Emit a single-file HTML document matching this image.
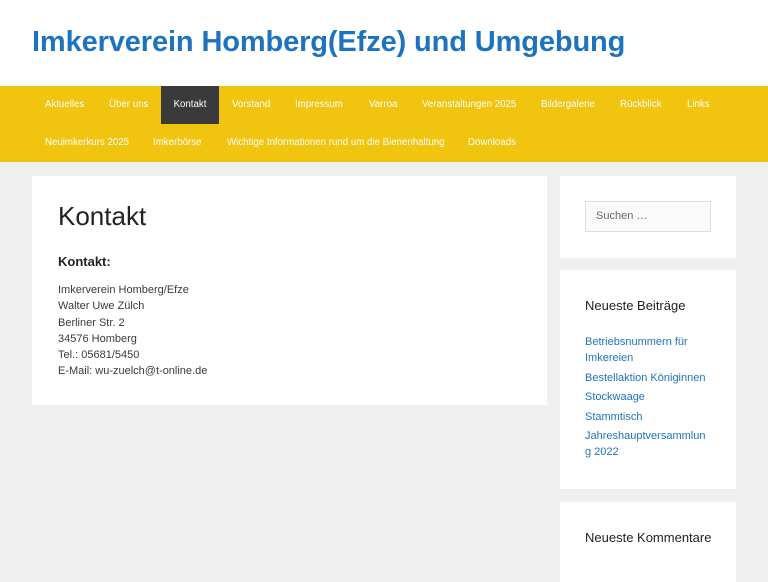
<!DOCTYPE html>
<html><head><meta charset="utf-8"><style>
*{margin:0;padding:0;box-sizing:border-box}
body{width:768px;height:576px;overflow:hidden;background:#efefef;font-family:"Liberation Sans",Arial,sans-serif;position:relative}
.hdr{position:absolute;left:0;top:0;width:768px;height:86px;background:#fff}
.hdr h1{position:absolute;left:32px;top:26px;font-size:29px;font-weight:bold;color:#1e73be;letter-spacing:-0.12px;white-space:nowrap}
.nav{position:absolute;left:0;top:86px;width:768px;height:76px;background:#f1c40f}
.nav span{position:absolute;font-size:9.7px;color:#fff;white-space:nowrap;line-height:38px}
.nav .act{background:#3a3a3a;width:58px;height:38px;text-align:center}
.box{position:absolute;background:#fff}
.main h2{position:absolute;left:26px;top:25px;font-size:26px;font-weight:normal;color:#222}
.main h3{position:absolute;left:26px;top:78px;font-size:13px;font-weight:bold;color:#222}
.main p{position:absolute;left:26px;top:106px;font-size:11px;line-height:16.3px;color:#3a3a3a}
.search{position:absolute;left:25px;top:25px;width:126px;height:31px;border:1px solid #ddd;background:#fafafa;font-size:11px;color:#666;padding:8px 10px}
.wt{position:absolute;left:25px;font-size:13px;color:#222}
.links{position:absolute;left:25px;top:64px;font-size:11px;line-height:16px;color:#1e73be;width:126px}
.links div{margin-bottom:3.5px}
</style></head><body>
<div class="hdr"><h1>Imkerverein Homberg(Efze) und Umgebung</h1></div>
<div class="nav">
<span style="left:45px;top:0">Aktuelles</span>
<span style="left:109px;top:0">Über uns</span>
<span class="act" style="left:161px;top:0">Kontakt</span>
<span style="left:232px;top:0">Vorstand</span>
<span style="left:295px;top:0">Impressum</span>
<span style="left:369px;top:0">Varroa</span>
<span style="left:422px;top:0">Veranstaltungen 2025</span>
<span style="left:541px;top:0">Bildergalerie</span>
<span style="left:620px;top:0">Rückblick</span>
<span style="left:687px;top:0">Links</span>
<span style="left:45px;top:38px">Neuimkerkurs 2025</span>
<span style="left:153px;top:38px">Imkerbörse</span>
<span style="left:227px;top:38px">Wichtige Informationen rund um die Bienenhaltung</span>
<span style="left:468px;top:38px">Downloads</span>
</div>
<div class="box main" style="left:32px;top:176px;width:515px;height:229px">
<h2>Kontakt</h2>
<h3>Kontakt:</h3>
<p>Imkerverein Homberg/Efze<br>Walter Uwe Zülch<br>Berliner Str. 2<br>34576 Homberg<br>Tel.: 05681/5450<br>E-Mail: wu-zuelch@t-online.de</p>
</div>
<div class="box" style="left:560px;top:176px;width:176px;height:82px"><div class="search">Suchen …</div></div>
<div class="box" style="left:560px;top:270px;width:176px;height:219px">
<div class="wt" style="top:28px">Neueste Beiträge</div>
<div class="links">
<div>Betriebsnummern für Imkereien</div>
<div>Bestellaktion Königinnen</div>
<div>Stockwaage</div>
<div>Stammtisch</div>
<div style="word-break:break-all">Jahreshauptversammlung 2022</div>
</div>
</div>
<div class="box" style="left:560px;top:502px;width:176px;height:80px">
<div class="wt" style="top:28px">Neueste Kommentare</div>
</div>
</body></html>
